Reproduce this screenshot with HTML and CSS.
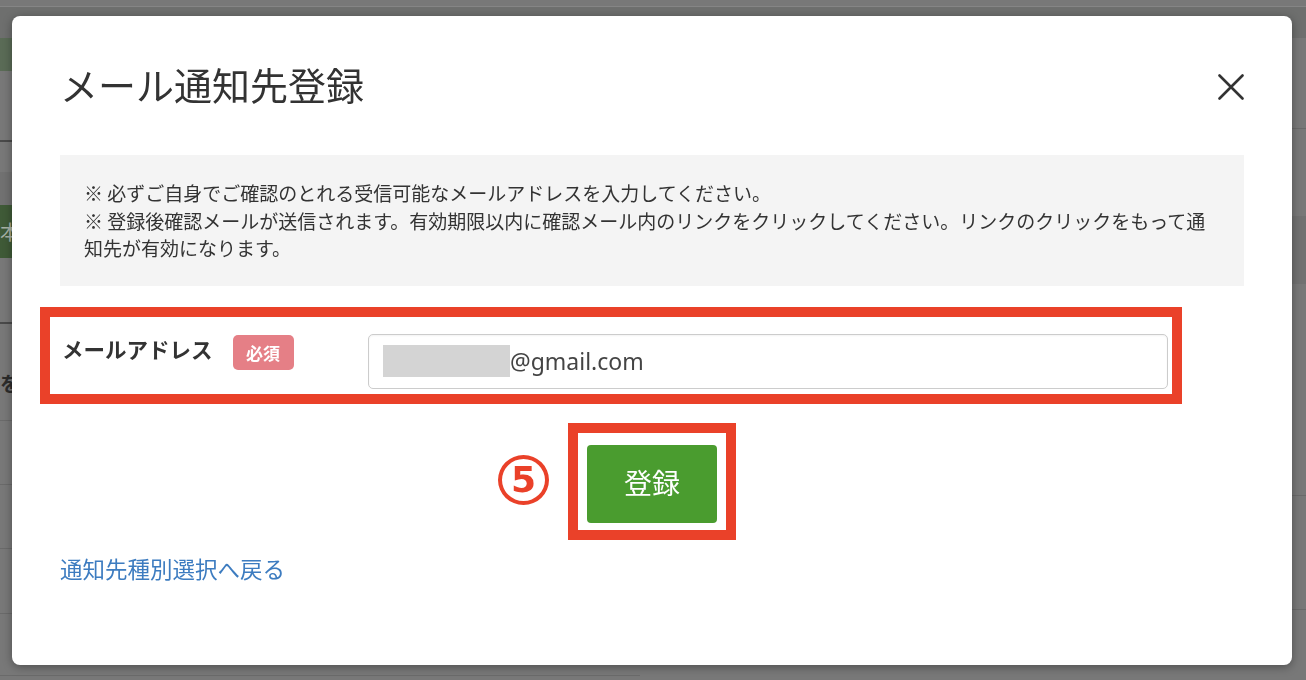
FILE: index.html
```html
<!DOCTYPE html>
<html lang="ja">
<head>
<meta charset="utf-8">
<title>メール通知先登録</title>
<link rel="stylesheet" href="styles.css">
</head>
<body>
<div class="backdrop" aria-hidden="true">
  <div class="bd-left">
    <div class="bd-top"></div>
    <div class="bd-green1"></div>
    <div class="bd-r71 bd-line-dark"></div>
    <div class="bd-r30"></div>
    <div class="bd-r33 bd-shade"></div>
    <div class="bd-green2"><span class="bd-char-light">本</span></div>
    <div class="bd-r32"></div>
    <div class="bd-r32 bd-line-dark"></div>
    <div class="bd-r97 bd-line"><span class="bd-char-dark">を</span></div>
    <div class="bd-r64 bd-line"></div>
    <div class="bd-r64 bd-line"></div>
    <div class="bd-r65 bd-line"></div>
    <div class="bd-r61 bd-line"></div>
  </div>
  <div class="bd-right">
    <div class="bd-top"></div>
    <div class="bd-r91 bd-line"></div>
    <div class="bd-r87"></div>
    <div class="bd-r68 bd-shade"></div>
    <div class="bd-r212 bd-line"></div>
    <div class="bd-r114 bd-line"></div>
  </div>
</div>

<div class="modal" role="dialog" aria-labelledby="modal-title">
  <div class="modal-head">
    <h1 class="modal-title" id="modal-title">メール通知先登録</h1>
    <button class="close" type="button" aria-label="閉じる">
      <svg width="26" height="26" viewBox="0 0 26 26"><path d="M1.5 1.5 L24.5 24.5 M24.5 1.5 L1.5 24.5" stroke="#333" stroke-width="2.6" stroke-linecap="round" fill="none"/></svg>
    </button>
  </div>

  <div class="notice">
    <p>※ 必ずご自身でご確認のとれる受信可能なメールアドレスを入力してください。</p>
    <p>※ 登録後確認メールが送信されます。有効期限以内に確認メール内のリンクをクリックしてください。リンクのクリックをもって通知先が有効になります。</p>
  </div>

  <div class="annot-row">
    <div class="field-label">
      <span class="label">メールアドレス</span>
      <span class="req">必須</span>
    </div>
    <div class="input"><span class="masked"></span>@gmail.com</div>
  </div>

  <div class="actions">
    <div class="annot-btn">
      <span class="step">5</span>
      <button class="btn" type="button">登録</button>
    </div>
  </div>

  <p class="back"><a href="#" class="back-link">通知先種別選択へ戻る</a></p>
</div>
</body>
</html>
```

FILE: styles.css
```css
html, body {
  margin: 0;
  padding: 0;
}
body {
  font-family: "Noto Sans CJK JP", "Noto Sans", sans-serif;
  color: #333;
  overflow: hidden;
}

/* backdrop (page under the overlay) */
.backdrop {
  display: flex;
  height: 680px;
  background: #787878;
  overflow: hidden;
}
.bd-left {
  width: 640px;
  display: flex;
  flex-direction: column;
}
.bd-right {
  flex: 1;
  display: flex;
  flex-direction: column;
}
.bd-top {
  height: 31px;
  margin-top: 6px;
  border-top: 1px solid #858585;
  background: #6e6f6e;
  flex: none;
}
.bd-green1 { height: 33px; background: #5a6b56; flex: none; }
.bd-green2 {
  height: 53px;
  background: #3f5a37;
  flex: none;
  display: flex;
  align-items: center;
}
.bd-shade { background: #717171; }
.bd-line { border-bottom: 1px solid #6a6a6a; }
.bd-line-dark { border-bottom: 2px solid #4a4a4a; }
.bd-r30 { height: 30px; flex: none; }
.bd-r32 { height: 32px; flex: none; }
.bd-r33 { height: 33px; flex: none; }
.bd-r61 { height: 61px; flex: none; }
.bd-r64 { height: 63px; flex: none; }
.bd-r65 { height: 64px; flex: none; }
.bd-r68 { height: 68px; flex: none; }
.bd-r71 { height: 69px; flex: none; }
.bd-r87 { height: 87px; flex: none; }
.bd-r91 { height: 90px; flex: none; }
.bd-r97 { height: 96px; flex: none; display: flex; align-items: flex-end; }
.bd-r114 { height: 113px; flex: none; }
.bd-r212 { height: 211px; flex: none; }
.bd-char-light {
  font-size: 20px;
  color: #a9b2a6;
}
.bd-char-dark {
  font-size: 20px;
  font-weight: 700;
  color: #2c2c2c;
  line-height: 28px;
  margin-bottom: 22px;
}

/* modal */
.modal {
  position: fixed;
  left: 12px;
  top: 16px;
  width: 1280px;
  height: 649px;
  box-sizing: border-box;
  padding: 0 48px;
  background: #fff;
  border-radius: 8px;
  box-shadow: 0 2px 10px rgba(0, 0, 0, 0.35);
}
.modal-head {
  display: flex;
  justify-content: space-between;
  align-items: center;
  margin-top: 45px;
  height: 46px;
}
.modal-title {
  margin: 0;
  font-size: 38px;
  font-weight: 400;
  line-height: 46px;
  color: #333;
}
.close {
  width: 26px;
  height: 26px;
  padding: 0;
  border: 0;
  background: none;
  display: block;
  margin-top: 6px;
}
.close svg { display: block; }

.notice {
  margin-top: 48px;
  background: #f4f4f4;
  padding: 24px 24px 24px;
  font-size: 19px;
  line-height: 27.5px;
  color: #333;
}
.notice p { margin: 0; }

/* annotated form row */
.annot-row {
  margin: 21px 0 0 -20px;
  width: 1142px;
  box-sizing: border-box;
  border: 10px solid #ea4129;
  padding: 17px 4px 5px 12px;
  display: flex;
  align-items: flex-start;
}
.field-label {
  width: 306px;
  flex: none;
  display: flex;
  align-items: flex-start;
  gap: 20px;
}
.label {
  font-size: 21.5px;
  font-weight: 700;
  line-height: 30px;
  color: #333;
}
.req {
  width: 61px;
  height: 35px;
  margin-top: 1px;
  border-radius: 5px;
  background: #e57f86;
  color: #fff;
  font-size: 17px;
  font-weight: 700;
  display: flex;
  align-items: center;
  justify-content: center;
}
.input {
  width: 800px;
  height: 55px;
  box-sizing: border-box;
  border: 1px solid #cccccc;
  border-radius: 5px;
  padding-left: 14px;
  display: flex;
  align-items: center;
  font-family: "Noto Sans", sans-serif;
  font-size: 23px;
  color: #444;
  box-shadow: inset 0 1px 2px rgba(0, 0, 0, 0.05);
}
.masked {
  width: 127px;
  height: 32px;
  background: #d4d4d4;
  flex: none;
}

/* actions */
.actions {
  display: flex;
  justify-content: center;
  margin-top: 19px;
}
.annot-btn {
  position: relative;
  border: 10px solid #ea4129;
  padding: 12px 9px 7px;
}
.btn {
  display: block;
  width: 130px;
  height: 78px;
  border: 0;
  border-radius: 4px;
  background: #4a9c2f;
  color: #fff;
  font-family: "Noto Sans CJK JP", sans-serif;
  font-size: 28px;
  line-height: 1;
  padding: 0 0 4px;
}
.step {
  position: absolute;
  right: calc(100% + 29px);
  top: 22px;
  width: 51px;
  height: 50px;
  box-sizing: border-box;
  border: 4px solid #ea4129;
  border-radius: 50%;
  color: #ea4129;
  font-family: "DejaVu Sans", sans-serif;
  font-weight: 700;
  font-size: 36px;
  line-height: 1;
  display: flex;
  align-items: center;
  justify-content: center;
}

.back {
  margin: 13px 0 0;
  line-height: 30px;
}
.back-link {
  font-size: 22.5px;
  color: #3d7cc0;
  text-decoration: none;
}
```
